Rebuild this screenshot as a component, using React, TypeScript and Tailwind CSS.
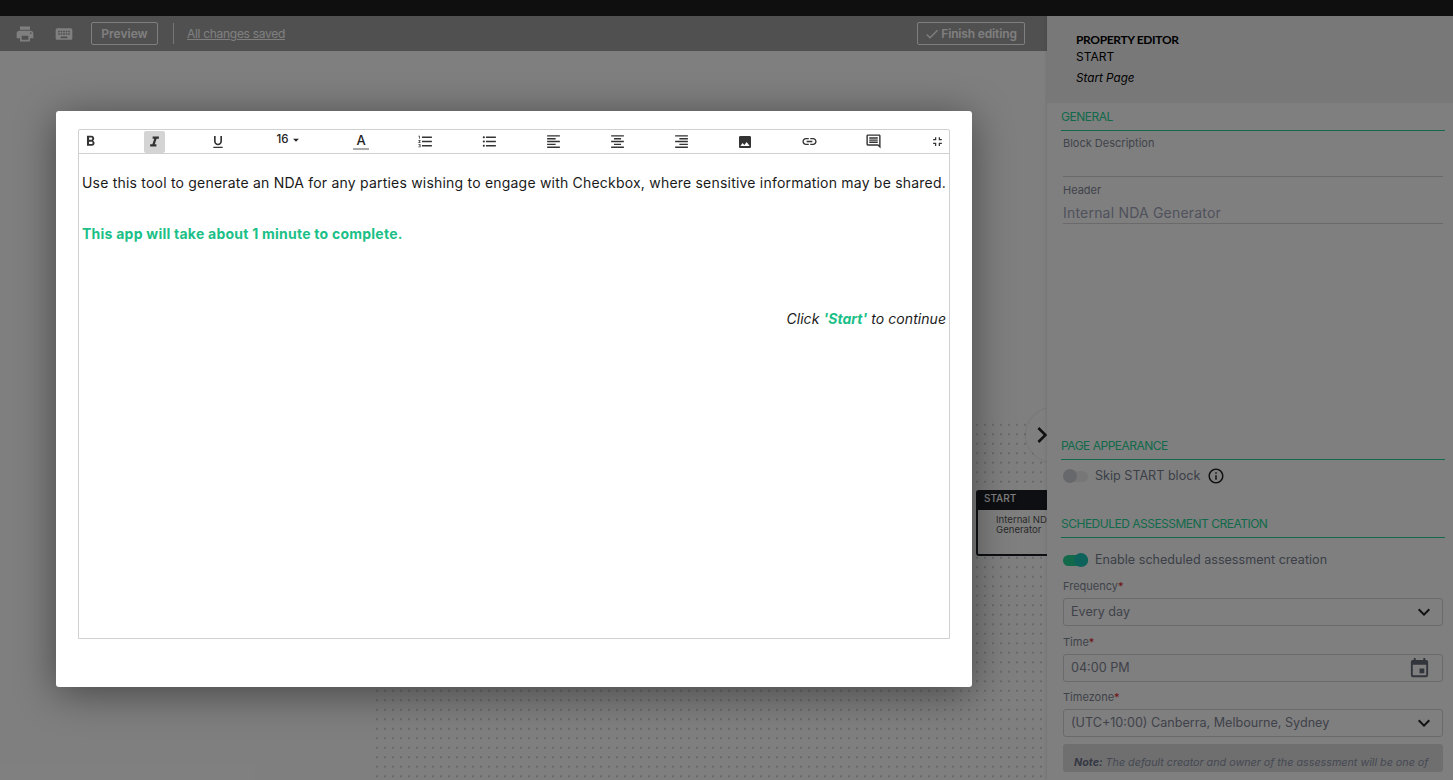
import {
  MdPrint,
  MdKeyboard,
  MdCheck,
  MdFormatBold,
  MdFormatUnderlined,
  MdArrowDropDown,
  MdFormatListNumbered,
  MdFormatListBulleted,
  MdFormatAlignLeft,
  MdFormatAlignCenter,
  MdFormatAlignRight,
  MdImage,
  MdLink,
  MdOutlineComment,
  MdFullscreenExit,
  MdEvent,
  MdInfoOutline,
  MdChevronRight,
  MdKeyboardArrowDown,
} from "react-icons/md";

function SectionHeading({ children, className }: { children: string; className?: string }) {
  return (
    <div className={`ml-[14px] mr-2 border-b border-[#24d496] pb-[5px] font-['Inter',sans-serif] text-[12px] leading-[16px] tracking-[-0.5px] text-[#24d496] ${className ?? ""}`}>
      {children}
    </div>
  );
}

function Label({ children, required }: { children: string; required?: boolean }) {
  return (
    <div className="ml-4 text-[11px] leading-[14px] text-[#7e8695]">
      {children}
      {required ? <span className="text-[#e02424]">*</span> : null}
    </div>
  );
}

function SelectBox({ value, icon }: { value: string; icon: React.ReactNode }) {
  return (
    <div className="ml-4 mr-[10px] flex h-[28px] items-center justify-between rounded-[3px] border border-[#d4d4d4] pl-[7px] pr-[6px] text-[12.6px] text-[#7e8494]">
      <span>{value}</span>
      {icon}
    </div>
  );
}

function ToolButton({ children, active, width = "w-[21px]" }: { children: React.ReactNode; active?: boolean; width?: string }) {
  return (
    <div className={`flex h-[22px] shrink-0 items-center justify-center rounded-[2px] text-[#333] ${width} ${active ? "bg-[#d4d4d4]" : ""}`}>
      {children}
    </div>
  );
}

function EditorToolbar() {
  return (
    <div className="flex h-[24px] items-center gap-[43px] border-b border-[#d0d0d0] pl-[0.5px]">
      <ToolButton><MdFormatBold size={17} /></ToolButton>
      <ToolButton active>
        <svg viewBox="0 0 24 24" width="15" height="15" fill="#333">
          <path d="M9 4v3.5h2.6L8.6 16.5H5V20h10v-3.5h-2.6l3-9H19V4z" />
        </svg>
      </ToolButton>
      <ToolButton><MdFormatUnderlined size={16} /></ToolButton>
      <ToolButton width="w-[36px]">
        <span className="flex items-center pb-[4px] text-[11.5px] font-medium text-[#222]">
          16
          <MdArrowDropDown size={14} />
        </span>
      </ToolButton>
      <ToolButton>
        <span className="flex flex-col items-center text-[13px] font-medium leading-[13px] text-[#222]">
          A
          <span className="mt-[1px] h-[2px] w-[16px] bg-[#aaa]" />
        </span>
      </ToolButton>
      <ToolButton><MdFormatListNumbered size={17} /></ToolButton>
      <ToolButton><MdFormatListBulleted size={17} /></ToolButton>
      <ToolButton><MdFormatAlignLeft size={17} /></ToolButton>
      <ToolButton><MdFormatAlignCenter size={17} /></ToolButton>
      <ToolButton><MdFormatAlignRight size={17} /></ToolButton>
      <ToolButton><MdImage size={16} /></ToolButton>
      <ToolButton><MdLink size={17} /></ToolButton>
      <ToolButton><MdOutlineComment size={17} /></ToolButton>
      <ToolButton><MdFullscreenExit size={15} /></ToolButton>
    </div>
  );
}

export default function App() {
  return (
    <div className="relative flex h-screen flex-col overflow-hidden bg-white font-['Inter',sans-serif]">
      <div className="h-4 shrink-0 bg-[#1f1f1f]" />

      <div className="flex min-h-0 flex-1">
        <div className="relative flex min-w-0 flex-1 flex-col">
          <div className="flex h-[35px] shrink-0 items-center bg-[#a0a0a0] pl-[15px] pr-[22px] text-white">
            <MdPrint size={20} />
            <MdKeyboard size={20} className="ml-[19px]" />
            <div className="ml-[17px] flex h-[23px] w-[67px] items-center justify-center rounded-[2px] border border-white text-[12px] font-semibold">Preview</div>
            <div className="ml-[15px] h-[21px] w-px bg-white/80" />
            <span className="ml-[13px] text-[12px] tracking-[-0.3px] underline">All changes saved</span>
            <div className="ml-auto flex h-[23px] w-[108px] items-center justify-center gap-[1px] rounded-[2px] border border-white pr-[1px] text-[12px] font-semibold tracking-[-0.15px]">
              <MdCheck size={16} />
              Finish editing
            </div>
          </div>

          <div className="relative min-h-0 flex-1 overflow-hidden">
            <div className="absolute bottom-0 left-[373px] right-0 top-[369px] bg-[radial-gradient(circle,#b0b0b0_0.6px,transparent_0.8px)] bg-[length:8px_9.5px]" />
            <div className="absolute left-[976px] top-[439px] h-[66px] w-[140px] rounded-[3px] border-2 border-[#1b1e25] bg-white">
              <div className="h-[18px] bg-[#1b1e25] pl-[6px] text-[10px] font-medium leading-[13px] text-white">START</div>
              <div className="mt-[5px] w-[66px] pl-[18px] text-[9.6px] leading-[10px] text-[#555]">
                <span className="whitespace-nowrap">Internal NDA</span> Generator
              </div>
            </div>
            <div className="absolute left-[1026px] top-[357px] flex h-[54px] w-[54px] items-center rounded-full bg-white shadow-[0_0_3px_rgba(0,0,0,0.15)]">
              <MdChevronRight size={32} className="text-[#222]" />
            </div>
          </div>
        </div>

        <div className="relative z-0 flex w-[406px] shrink-0 flex-col bg-white shadow-[-1px_0_3px_rgba(0,0,0,0.1)]">
          <div className="h-[87px] shrink-0 bg-[#f0f0f0] pl-[29px] pt-[16px] text-[12px] text-black">
            <div className="font-['Lato',sans-serif] text-[12px] font-bold leading-[16px] tracking-[-0.35px]">PROPERTY EDITOR</div>
            <div className="mt-[1px] leading-[16px]">START</div>
            <div className="mt-[5px] text-[11.7px] italic leading-[16px]">Start Page</div>
          </div>

          <SectionHeading className="mt-[6px]">GENERAL</SectionHeading>
          <div className="mt-[5px]"><Label>Block Description</Label></div>
          <div className="ml-4 mr-[10px] mt-[26px] border-b border-[#d4d4d4]" />
          <div className="mt-[6px]"><Label>Header</Label></div>
          <div className="ml-4 mr-[10px] mt-[6px] border-b border-[#d4d4d4] text-[14px] leading-[20px] tracking-[0.2px] text-[#9ea4b8]">Internal NDA Generator</div>

          <SectionHeading className="mt-[214px]">PAGE APPEARANCE</SectionHeading>
          <div className="ml-4 mt-[7px] flex h-[18px] items-center text-[12.6px] text-[#787e90]">
            <div className="relative h-[11px] w-[25px] rounded-full bg-[#eeeeee]">
              <div className="absolute -top-[1.5px] left-0 h-[14px] w-[14px] rounded-full bg-[#cfd1d9]" />
            </div>
            <span className="ml-[7px]">Skip START block</span>
            <MdInfoOutline size={18} className="ml-[7px] text-[#222]" />
          </div>

          <SectionHeading className="mt-[31px]">SCHEDULED ASSESSMENT CREATION</SectionHeading>
          <div className="ml-4 mt-[13px] flex h-[18px] items-center text-[12.6px] text-[#787e90]">
            <div className="relative h-[11px] w-[25px] rounded-full bg-[#24d496]">
              <div className="absolute -top-[1.5px] right-0 h-[14px] w-[14px] rounded-full bg-[#1cc4b8]" />
            </div>
            <span className="ml-[7px]">Enable scheduled assessment creation</span>
          </div>

          <div className="mt-[10px]"><Label required>Frequency</Label></div>
          <div className="mt-[5px]"><SelectBox value="Every day" icon={<MdKeyboardArrowDown size={24} className="text-[#222]" />} /></div>
          <div className="mt-[9px]"><Label required>Time</Label></div>
          <div className="mt-[5px]"><SelectBox value="04:00 PM" icon={<MdEvent size={23} className="mr-[5px] text-[#666a78]" />} /></div>
          <div className="mt-[8px]"><Label required>Timezone</Label></div>
          <div className="mt-[5px]"><SelectBox value="(UTC+10:00) Canberra, Melbourne, Sydney" icon={<MdKeyboardArrowDown size={24} className="text-[#222]" />} /></div>

          <div className="ml-4 mr-[10px] mt-[7px] h-[28px] shrink-0 overflow-hidden rounded-[3px] bg-[#dedede] pl-[11px] pr-[8px] pt-[11px] text-[10.75px] italic leading-[15px] text-[#8c92a8]">
            <b className="text-[#6b708a]">Note:</b> The default creator and owner of the assessment will be one of the assigned users.
          </div>
        </div>
      </div>

      <div className="absolute inset-0 z-10 bg-black/50" />

      <div className="absolute left-[56px] top-[111px] z-20 h-[576px] w-[916px] rounded-[3px] bg-white pl-[22px] pr-[22px] pt-[18px] shadow-[0_6px_40px_rgba(0,0,0,0.45)]">
        <div className="h-[510px] rounded-t-[2px] border border-[#d0d0d0]">
          <EditorToolbar />
          <div className="px-[3px] pt-[19px] text-[14px] leading-[20px] text-[#1a1a1a]">
            <p className="whitespace-nowrap tracking-[0.205px]">Use this tool to generate an NDA for any parties wishing to engage with Checkbox, where sensitive information may be shared.</p>
            <p className="mt-[31px] font-bold tracking-[0.24px] text-[#1bbf87]">This app will take about 1 minute to complete.</p>
            <p className="mt-[65px] text-right italic tracking-[0.05px]">
              Click <b className="text-[#1bbf87]">'Start'</b> to continue
            </p>
          </div>
        </div>
      </div>
    </div>
  );
}
